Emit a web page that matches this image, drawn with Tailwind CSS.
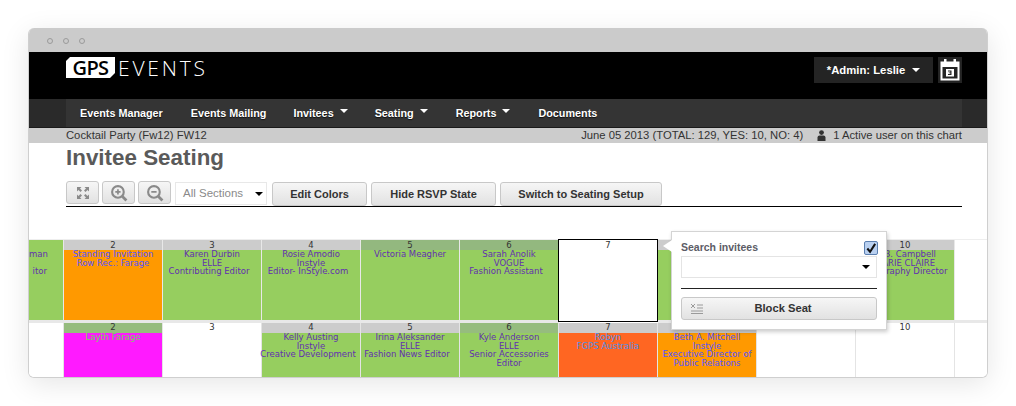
<!DOCTYPE html>
<html><head><meta charset="utf-8">
<script src="https://cdn.jsdelivr.net/npm/@tailwindcss/browser@4"></script>
</head>
<body class="bg-white w-[1016px] h-[406px] overflow-hidden font-['Liberation_Sans',Arial,sans-serif]">
<div class="pt-[28px] pl-[28px]">
<div class="relative w-[960px] h-[350px] rounded-[6px] overflow-hidden bg-white border border-t-0 border-[#cfcfcf] shadow-[0_6px_28px_rgba(0,0,0,0.10)] box-border">
  <!-- chrome -->
  <div class="h-[24px] bg-[#cbcbcb] flex items-center gap-[10px] pl-[18px] pt-[2px]">
    <span class="w-[6px] h-[6px] rounded-full border border-[#9a9a9a]"></span>
    <span class="w-[6px] h-[6px] rounded-full border border-[#9a9a9a]"></span>
    <span class="w-[6px] h-[6px] rounded-full border border-[#9a9a9a]"></span>
  </div>
  <!-- header -->
  <div class="h-[47px] bg-black flex items-start pl-[37px] pr-[25px] pt-[5px]">
    <div class="flex items-center">
      <span class="bg-white text-black font-semibold text-[20px] leading-[21px] h-[21px] w-[49px] text-center tracking-[-0.6px] font-['Open_Sans','Liberation_Sans',sans-serif] [clip-path:polygon(4px_0,100%_0,100%_16px,44px_100%,0_100%,0_4px)]">GPS</span>
      <span class="ml-[3px] text-white text-[21px] leading-[20px] tracking-[2.8px] font-['Open_Sans','Liberation_Sans',sans-serif] font-light">EVENTS</span>
    </div>
    <div class="ml-auto flex gap-[5px]">
      <div class="w-[119px] h-[26px] bg-[#242424] text-white text-[11.3px] font-bold flex items-center justify-center gap-[7px]"><span>*Admin: Leslie</span><span class="w-0 h-0 border-x-[4px] border-x-transparent border-t-[4px] border-t-white"></span></div>
      <div class="w-[24px] h-[26px] bg-[#242424] flex items-center justify-center">
        <svg width="20" height="22" viewBox="0 0 20 22"><path d="M4 0h2.500v3H4zM13.500 0H16v3h-2.500z" fill="#fff"/><path d="M0.500 2.500H19.500V21.500H0.500z" fill="#fff"/><rect x="2.500" y="8" width="15" height="11.500" fill="#242424"/><rect x="6" y="10" width="8" height="7.500" fill="#fff"/><path d="M8 11.500h3.500v4.500H8v-1h2.300v-0.700H8.700v-0.900h1.600v-0.900H8z" fill="#242424"/></svg>
      </div>
    </div>
  </div>
  <!-- nav -->
  <div class="h-[29px] bg-[#2a2a2a] border-b border-[#1a1a1a] pl-[37px] pr-[25px]">
    <div class="h-[28px] bg-[#343434] flex items-center pl-[14px] text-white text-[10.8px] font-bold [text-shadow:0_1px_1px_rgba(0,0,0,0.7)]">
      <span class="mr-[28px]">Events Manager</span>
      <span class="mr-[27px]">Events Mailing</span>
      <span class="flex items-center mr-[27px]">Invitees<i class="ml-[6px] mb-[4px] w-0 h-0 border-x-[4px] border-x-transparent border-t-[4px] border-t-white"></i></span>
      <span class="flex items-center mr-[28px]">Seating<i class="ml-[6px] mb-[4px] w-0 h-0 border-x-[4px] border-x-transparent border-t-[4px] border-t-white"></i></span>
      <span class="flex items-center mr-[28px]">Reports<i class="ml-[6px] mb-[4px] w-0 h-0 border-x-[4px] border-x-transparent border-t-[4px] border-t-white"></i></span>
      <span>Documents</span>
    </div>
  </div>
  <!-- status -->
  <div class="h-[15px] bg-[#cccccc] flex items-center pl-[37px] pr-[25px] text-[11.25px] leading-[15px] text-[#333]">
    <span>Cocktail Party (Fw12) FW12</span>
    <span class="ml-auto">June 05 2013 (TOTAL: 129, YES: 10, NO: 4)</span>
    <svg class="ml-[14px] mr-[7px]" width="9" height="11" viewBox="0 0 9 11"><circle cx="4.500" cy="2.600" r="2.400" fill="#333"/><path d="M0.500 11V7.500Q0.500 5.500 2.500 5.500H6.500Q8.500 5.500 8.500 7.500V11Z" fill="#333"/></svg>
    <span>1 Active user on this chart</span>
  </div>
  <!-- title -->
  <h1 class="pl-[37px] mt-[1px] h-[30px] text-[22.4px] leading-[28px] font-bold text-[#5a5a5a]">Invitee Seating</h1>
  <!-- toolbar -->
  <div class="ml-[37px] mr-[25px] h-[25px] mt-[8px] border-b border-black flex items-start">
    <button class="w-[33px] h-[23px] -mt-[1px] mr-[3px] rounded-[3px] border border-[#c8c8c8] bg-gradient-to-b from-[#f6f6f6] to-[#e2e2e2] flex items-center justify-center">
      <svg width="14" height="14" viewBox="0 0 14 14" fill="#8a8a8a"><path d="M1 1h4.500L4 2.500 6 4.500 4.500 6 2.500 4 1 5.500zM13 1v4.500L11.500 4 9.500 6 8 4.500 10 2.500 8.500 1zM1 13V8.500L2.500 10 4.500 8 6 9.500 4 11.500 5.500 13zM13 13H8.500L10 11.500 8 9.500 9.500 8 11.500 10 13 8.500z"/></svg>
    </button>
    <button class="w-[33px] h-[23px] -mt-[1px] mr-[3px] rounded-[3px] border border-[#c8c8c8] bg-gradient-to-b from-[#f6f6f6] to-[#e2e2e2] flex items-center justify-center">
      <svg width="18" height="18" viewBox="0 0 17 17" fill="none" stroke="#8a8a8a"><circle cx="7.500" cy="7.500" r="5.500" stroke-width="2"/><path d="M11.500 11.500L15.500 15.500" stroke-width="2.600"/><path d="M5 7.500h5M7.500 5v5" stroke-width="1.600"/></svg>
    </button>
    <button class="w-[33px] h-[23px] -mt-[1px] mr-[4px] rounded-[3px] border border-[#c8c8c8] bg-gradient-to-b from-[#f6f6f6] to-[#e2e2e2] flex items-center justify-center">
      <svg width="18" height="18" viewBox="0 0 17 17" fill="none" stroke="#8a8a8a"><circle cx="7.500" cy="7.500" r="5.500" stroke-width="2"/><path d="M11.500 11.500L15.500 15.500" stroke-width="2.600"/><path d="M5 7.500h5" stroke-width="1.600"/></svg>
    </button>
    <div class="w-[92px] h-[23px] mr-[5px] border border-[#e8e8e8] bg-white flex items-center pl-[7px] text-[11.5px] text-[#8a8a8a]">All Sections<i class="ml-[12px] mt-[1px] w-0 h-0 border-x-[4px] border-x-transparent border-t-[4px] border-t-black"></i></div>
    <button class="w-[95px] h-[24px] mr-[4px] rounded-[3px] border border-[#c8c8c8] bg-gradient-to-b from-[#f6f6f6] to-[#e2e2e2] text-[11px] font-bold text-[#333]">Edit Colors</button>
    <button class="w-[125px] h-[24px] mr-[4px] rounded-[3px] border border-[#c8c8c8] bg-gradient-to-b from-[#f6f6f6] to-[#e2e2e2] text-[11px] font-bold text-[#333]">Hide RSVP State</button>
    <button class="w-[162px] h-[24px] rounded-[3px] border border-[#c8c8c8] bg-gradient-to-b from-[#f6f6f6] to-[#e2e2e2] text-[11px] font-bold text-[#333]">Switch to Seating Setup</button>
  </div>
  <!-- grid -->
  <div class="mt-[32px] border-t border-[#eeeeee] grid grid-cols-[35px_repeat(9,99px)_1fr] grid-rows-[83px_55px] text-[8.5px] leading-[8.5px] text-center font-['DejaVu_Sans',sans-serif]">
    <!-- row 1 -->
    <div class="border-r border-b-[3px] border-[#e8e8e8] bg-[#96ce5f] pt-[10px] pr-[16px] text-right text-[#6230b0]">man<br><br>itor</div>
    <div class="border-r border-b-[3px] border-[#e8e8e8] bg-[#ff9900] text-[#5555ff]"><div class="h-[10px] bg-[#cccccc] text-[#333] leading-[10px]">2</div>Standing Invitation<br>Row Rec.: Farage</div>
    <div class="border-r border-b-[3px] border-[#e8e8e8] bg-[#96ce5f] text-[#6230b0]"><div class="h-[10px] bg-[#cccccc] text-[#333] leading-[10px]">3</div>Karen Durbin<br>ELLE<span class="block -translate-x-[3px]">Contributing Editor</span></div>
    <div class="border-r border-b-[3px] border-[#e8e8e8] bg-[#96ce5f] text-[#6230b0]"><div class="h-[10px] bg-[#cccccc] text-[#333] leading-[10px]">4</div>Rosie Amodio<br>Instyle<span class="block -translate-x-[3px]">Editor- InStyle.com</span></div>
    <div class="border-r border-b-[3px] border-[#e8e8e8] bg-[#96ce5f] text-[#6230b0]"><div class="h-[10px] bg-[#93b87f] text-[#333] leading-[10px]">5</div>Victoria Meagher</div>
    <div class="border-r border-b-[3px] border-[#e8e8e8] bg-[#96ce5f] text-[#6230b0]"><div class="h-[10px] bg-[#93b87f] text-[#333] leading-[10px]">6</div>Sarah Anolik<br>VOGUE<span class="block -translate-x-[3px]">Fashion Assistant</span></div>
    <div class="relative z-10 -mt-[1px] -ml-[1px] w-[100px] h-[83px] border border-black bg-white text-[#333]"><div class="h-[10px] leading-[10px]">7</div></div>
    <div class="border-r border-b-[3px] border-[#e8e8e8] bg-[#96ce5f]"><div class="h-[10px] bg-[#cccccc]"></div></div>
    <div class="border-r border-b-[3px] border-[#e8e8e8] bg-[#96ce5f]"><div class="h-[10px] bg-[#cccccc]"></div></div>
    <div class="border-r border-b-[3px] border-[#e8e8e8] bg-[#96ce5f] text-[#6230b0]"><div class="h-[10px] bg-[#cccccc] text-[#333] leading-[10px]">10</div>Jo B. Campbell<br>MARIE CLAIRE<span class="block -translate-x-[3px]">Photography Director</span></div>
    <div class="border-b-[3px] border-[#e8e8e8] bg-white"></div>
    <!-- row 2 -->
    <div class="border-r border-[#e4e4e4] bg-white"></div>
    <div class="border-r border-[#e4e4e4] bg-[#ff1aff] text-[#6fd35a]"><div class="h-[10px] bg-[#96bc7e] text-[#333] leading-[9px]">2</div>Layth Farage</div>
    <div class="border-r border-[#e4e4e4] bg-white text-[#333]"><div class="h-[10px] leading-[9px]">3</div></div>
    <div class="border-r border-[#e4e4e4] bg-[#96ce5f] text-[#6230b0]"><div class="h-[10px] bg-[#cccccc] text-[#333] leading-[9px]">4</div>Kelly Austing<br>Instyle<span class="block -translate-x-[3px]">Creative Development</span></div>
    <div class="border-r border-[#e4e4e4] bg-[#96ce5f] text-[#6230b0]"><div class="h-[10px] bg-[#cccccc] text-[#333] leading-[9px]">5</div>Irina Aleksander<br>ELLE<span class="block -translate-x-[3px]">Fashion News Editor</span></div>
    <div class="border-r border-[#e4e4e4] bg-[#96ce5f] text-[#6230b0]"><div class="h-[10px] bg-[#96bc7e] text-[#333] leading-[9px]">6</div>Kyle Anderson<br>ELLE<br>Senior Accessories<br>Editor</div>
    <div class="border-r border-[#e4e4e4] bg-[#ff6622] text-[#4d90e8]"><div class="h-[10px] bg-[#cccccc] text-[#333] leading-[9px]">7</div>Robyn<br>FGPS Australia</div>
    <div class="border-r border-[#e4e4e4] bg-[#ff9900] text-[#5555ff]"><div class="h-[10px] bg-[#cccccc]"></div>Beth A. Mitchell<br>Instyle<br>Executive Director of<br>Public Relations</div>
    <div class="border-r border-[#e4e4e4] bg-white"></div>
    <div class="border-r border-[#e4e4e4] bg-white text-[#333]"><div class="h-[10px] leading-[9px]">10</div></div>
    <div class="bg-white"></div>
  </div>
  <!-- popover -->
  <div class="absolute left-[642px] top-[203px] w-[216px] h-[99px] bg-white border border-[#d4d4d4] shadow-[1px_2px_4px_rgba(0,0,0,0.2)] px-[9px] z-20">
    <span class="absolute -left-[9px] top-[8px] w-0 h-0 border-y-[6px] border-y-transparent border-r-[9px] border-r-white"></span>
    <div class="h-[24px] flex items-end text-[10.5px] font-bold text-[#5c5c66] relative"><span>Search invitees</span>
      <span class="absolute -right-[1px] top-[9px] w-[14px] h-[14px] rounded-[2px] border border-[#5b7fb0] bg-[#b9d0f0] flex items-center justify-center">
        <svg width="13" height="13" viewBox="0 0 13 13" fill="none"><path d="M2.500 6.500L5.500 10L11 1.500" stroke="#111" stroke-width="2.200"/></svg>
      </span>
    </div>
    <div class="h-[22px] border border-[#e4e4e4] flex items-center justify-end pr-[6px]"><i class="w-0 h-0 border-x-[4px] border-x-transparent border-t-[4px] border-t-black"></i></div>
    <div class="h-px bg-[#222] mt-[10px]"></div>
    <button class="mt-[8px] w-full h-[23px] rounded-[3px] border border-[#c8c8c8] bg-gradient-to-b from-[#f6f6f6] to-[#e2e2e2] text-[11.2px] font-bold text-[#333] flex items-center pl-[8px]">
      <svg width="14" height="11" viewBox="0 0 14 11" stroke="#9a9a9a" fill="none"><path d="M1 1l4 4M5 1L1 5M7 2h6M7 5h6M1 8h12M1 10.500h12"/></svg>
      <span class="flex-1 text-center pr-[14px]">Block Seat</span>
    </button>
  </div>
</div>
</div>
</body></html>
